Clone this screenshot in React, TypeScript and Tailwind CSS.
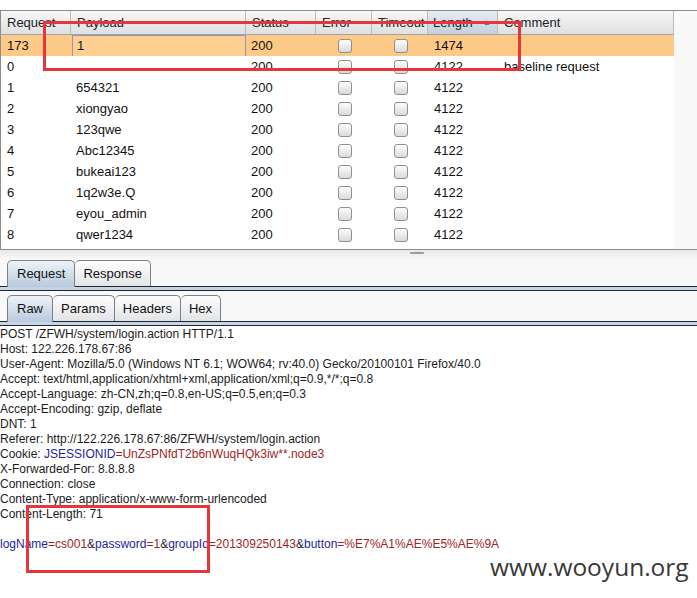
import React from 'react'

const rows = [
  { id: '173', payload: '1', status: '200', length: '1474', comment: '' },
  { id: '0', payload: '', status: '200', length: '4122', comment: 'baseline request' },
  { id: '1', payload: '654321', status: '200', length: '4122', comment: '' },
  { id: '2', payload: 'xiongyao', status: '200', length: '4122', comment: '' },
  { id: '3', payload: '123qwe', status: '200', length: '4122', comment: '' },
  { id: '4', payload: 'Abc12345', status: '200', length: '4122', comment: '' },
  { id: '5', payload: 'bukeai123', status: '200', length: '4122', comment: '' },
  { id: '6', payload: '1q2w3e.Q', status: '200', length: '4122', comment: '' },
  { id: '7', payload: 'eyou_admin', status: '200', length: '4122', comment: '' },
  { id: '8', payload: 'qwer1234', status: '200', length: '4122', comment: '' },
]

const cols = 'grid grid-cols-[70px_175px_70px_56px_56px_70px_176px]'

function Check() {
  return (
    <div className="w-[14px] h-[14px] rounded-[3px] border border-[#8e8f91] bg-gradient-to-b from-[#fdfdfd] to-[#d9dadc]" />
  )
}

function Tab({ label, selected }: { label: string; selected?: boolean }) {
  return (
    <div
      className={
        selected
          ? 'h-[27px] -mb-px px-[9px] flex items-center rounded-t-[5px] border border-b-0 border-[#76818f] bg-gradient-to-b from-[#eef3f8] to-[#b9c9dc] text-[13px] text-[#111]'
          : 'h-[26px] px-[8px] flex items-center rounded-t-[5px] border border-b-0 border-l-0 border-[#76818f] bg-gradient-to-b from-[#fdfdfd] to-[#e3e4e6] text-[13px] text-[#111]'
      }>
      {label}
    </div>
  )
}

function TabBar({ tabs }: { tabs: string[] }) {
  return (
    <div>
      <div className="flex items-end pl-[7px] border-b border-[#1d2633]">
        {tabs.map((t, i) => (
          <Tab key={t} label={t} selected={i === 0} />
        ))}
      </div>
      <div className="h-[4px] bg-[#c7d4e4] border-b border-[#1d2633]" />
    </div>
  )
}

const B = ({ children }: { children: React.ReactNode }) => <span className="text-[#25259c]">{children}</span>
const R = ({ children }: { children: React.ReactNode }) => <span className="text-[#a02424]">{children}</span>

export default function App() {
  return (
    <div className="relative w-[697px] h-[598px] overflow-hidden bg-white font-['Liberation_Sans',Arial,sans-serif] text-[#111]">
      <div className="h-[10px] bg-white" />

      {/* results table */}
      <div className="h-[240px] flex border-y border-l border-[#8d8d8d] bg-white">
        <div className="w-[673px] flex flex-col">
          <div className={`${cols} h-[24px] border-b border-[#a3a3a3] bg-gradient-to-b from-[#f7f7f7] to-[#dfe0e2] text-[13px] text-[#222]`}>
            {['Request', 'Payload', 'Status', 'Error', 'Timeout'].map((h) => (
              <div key={h} className="pl-[6px] flex items-center border-r border-[#b9bbbe]">
                {h}
              </div>
            ))}
            <div className="pl-[5px] pr-[6px] flex items-center justify-between border-r border-[#b9bbbe] bg-gradient-to-b from-[#e6ecf3] to-[#c4d0de]">
              Length
              <span className="text-[8px] text-[#5f7391]">▲</span>
            </div>
            <div className="pl-[6px] flex items-center border-r border-[#b9bbbe]">Comment</div>
          </div>

          {rows.map((r, i) => (
            <div
              key={r.id}
              className={`${cols} h-[21px] text-[13px] text-[#111] ${i === 0 ? 'bg-[#fcc986]' : 'bg-white'}`}>
              <div className="pl-[6px] flex items-center">{r.id}</div>
              <div
                className={`pl-[4px] flex items-center ${i === 0 ? 'ml-px border border-[#8b9bb4] bg-[#fdcf91]' : 'pl-[5px]'}`}>
                {r.payload}
              </div>
              <div className="pl-[5px] flex items-center">{r.status}</div>
              <div className="flex items-center justify-center pl-px">
                <Check />
              </div>
              <div className="flex items-center justify-center pl-px">
                <Check />
              </div>
              <div className="pl-[6px] flex items-center">{r.length}</div>
              <div className="pl-[6px] flex items-center">{r.comment}</div>
            </div>
          ))}
        </div>
        <div className="flex-1 bg-[#f9f9f9]" />
      </div>

      {/* splitter */}
      <div className="h-[8px] bg-gradient-to-b from-[#e9e9e9] to-[#f6f6f6] flex justify-center pl-[136px]">
        <div className="mt-[2px] w-[14px] h-[2px] bg-[#9c9c9c] rounded" />
      </div>

      <div className="bg-[#f8f8f8] pt-[2px]">
        <TabBar tabs={['Request', 'Response']} />
        <div className="h-[4px]" />
        <TabBar tabs={['Raw', 'Params', 'Headers', 'Hex']} />
      </div>

      {/* raw request */}
      <div className="bg-white pt-px text-[12px] leading-[15px] text-[#1c1c1c] whitespace-pre">
        <div>POST /ZFWH/system/login.action HTTP/1.1</div>
        <div>Host: 122.226.178.67:86</div>
        <div>User-Agent: Mozilla/5.0 (Windows NT 6.1; WOW64; rv:40.0) Gecko/20100101 Firefox/40.0</div>
        <div>Accept: text/html,application/xhtml+xml,application/xml;q=0.9,*/*;q=0.8</div>
        <div>Accept-Language: zh-CN,zh;q=0.8,en-US;q=0.5,en;q=0.3</div>
        <div>Accept-Encoding: gzip, deflate</div>
        <div>DNT: 1</div>
        <div>Referer: http://122.226.178.67:86/ZFWH/system/login.action</div>
        <div>
          Cookie: <B>JSESSIONID</B>
          <R>=UnZsPNfdT2b6nWuqHQk3iw**.node3</R>
        </div>
        <div>X-Forwarded-For: 8.8.8.8</div>
        <div>Connection: close</div>
        <div>Content-Type: application/x-www-form-urlencoded</div>
        <div>Content-Length: 71</div>
        <div>&nbsp;</div>
        <div>
          <B>logName</B>
          <R>=cs001</R>&amp;<B>password</B>
          <R>=1</R>&amp;<B>groupId</B>
          <R>=201309250143</R>&amp;<B>button</B>
          <R>=%E7%A1%AE%E5%AE%9A</R>
        </div>
      </div>

      {/* annotation overlays */}
      <div className="absolute left-[43px] top-[21px] w-[478px] h-[50px] border-[3px] border-[#e6353b]" />
      <div className="absolute left-[26px] top-[505px] w-[184px] h-[68px] border-[3px] border-[#e6353b]" />
      <div className="absolute left-[490px] top-[552px] text-[24.5px] leading-[30px] text-[#383838] font-['Open_Sans',sans-serif]">
        www.wooyun.org
      </div>
    </div>
  )
}
